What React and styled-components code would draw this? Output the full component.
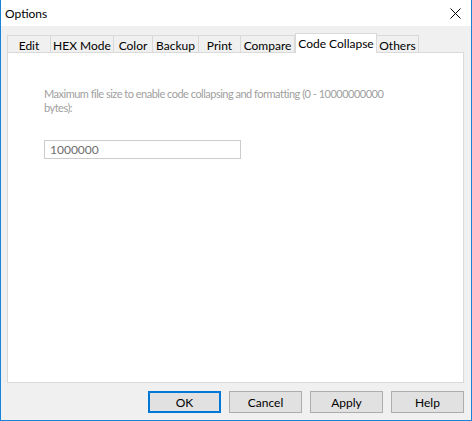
import React, { useState } from "react";
import styled, { createGlobalStyle } from "styled-components";

const GlobalStyle = createGlobalStyle`
  html, body {
    margin: 0;
    padding: 0;
    background: #ffffff;
  }
  body {
    font-family: Lato, "Liberation Sans", Arial, sans-serif;
    font-size: 12px;
    color: #000;
  }
`;

// Window frame
const Window = styled.div`
  width: 472px;
  height: 421px;
  box-sizing: border-box;
  border: 1px solid #1883d7;
  border-top: none;
  background: #f0f0f0;
  display: flex;
  flex-direction: column;
`;

const TitleBar = styled.div`
  height: 26px;
  flex-shrink: 0;
  background: #ffffff;
  display: flex;
  align-items: center;
  justify-content: space-between;
  padding: 0 10px 0 4px;
`;

const Title = styled.span`
  font-size: 12px;
  color: #000;
  padding-top: 1px;
`;

const CloseButton = styled.button`
  border: none;
  background: transparent;
  padding: 0;
  width: 12px;
  height: 12px;
  display: flex;
  align-items: center;
  justify-content: center;
`;

const Body = styled.div`
  flex: 1;
  display: flex;
  flex-direction: column;
  padding: 7px 7px 7px 6px;
`;

// Tabs
const TabStrip = styled.div`
  display: flex;
  align-items: flex-end;
  height: 20px;
  position: relative;
  z-index: 1;
`;

const Tab = styled.div`
  box-sizing: border-box;
  width: ${(p) => p.$w}px;
  height: ${(p) => (p.$active ? 20 : 18)}px;
  border: 1px solid #d9d9d9;
  border-bottom: ${(p) => (p.$active ? "none" : "1px solid #d9d9d9")};
  border-left: ${(p) => (p.$first || p.$active ? "1px solid #d9d9d9" : "none")};
  background: ${(p) => (p.$active ? "#ffffff" : "#f0f0f0")};
  display: flex;
  align-items: center;
  justify-content: center;
  padding-top: ${(p) => (p.$active ? 0 : 2)}px;
  cursor: default;
  white-space: nowrap;
`;

const Panel = styled.div`
  flex: 1;
  margin-top: -1px;
  background: #ffffff;
  border: 1px solid #d9d9d9;
  padding: 34px 36px 0 36px;
  display: flex;
  flex-direction: column;
`;

const Label = styled.div`
  color: #a0a0a0;
  font-size: 11px;
  letter-spacing: -0.5px;
  line-height: 14px;
  white-space: nowrap;
`;

const Input = styled.input`
  margin-top: 25px;
  width: 197px;
  height: 19px;
  box-sizing: border-box;
  border: 1px solid #cccccc;
  padding: 0 5px;
  font-family: Lato, "Liberation Sans", Arial, sans-serif;
  font-size: 12px;
  color: #6d6d6d;
  background: #ffffff;
  outline: none;
`;

// Buttons
const ButtonRow = styled.div`
  display: flex;
  justify-content: flex-end;
  gap: 8px;
  margin-top: 8px;
`;

const Button = styled.button`
  box-sizing: border-box;
  width: 73px;
  height: 22px;
  background: #e1e1e1;
  border: ${(p) => (p.$default ? "2px solid #0078d7" : "1px solid #adadad")};
  font-family: Lato, "Liberation Sans", Arial, sans-serif;
  font-size: 12px;
  color: #000;
  padding: 0;
`;

const tabs = [
  { name: "Edit", w: 44 },
  { name: "HEX Mode", w: 63 },
  { name: "Color", w: 39 },
  { name: "Backup", w: 46 },
  { name: "Print", w: 42 },
  { name: "Compare", w: 54 },
  { name: "Code Collapse", w: 82 },
  { name: "Others", w: 42 },
];

const App = () => {
  const [active, setActive] = useState("Code Collapse");

  return (
    <>
      <GlobalStyle />
      <Window>
        <TitleBar>
          <Title>Options</Title>
          <CloseButton aria-label="Close">
            <svg width="11" height="11" viewBox="0 0 11 11">
              <path d="M0.5 0.5 L10.5 10.5 M10.5 0.5 L0.5 10.5" stroke="#000" strokeWidth="1" />
            </svg>
          </CloseButton>
        </TitleBar>
        <Body>
          <TabStrip>
            {tabs.map((t, i) => (
              <Tab
                key={t.name}
                $w={t.w}
                $first={i === 0}
                $active={t.name === active}
                onClick={() => setActive(t.name)}
              >
                {t.name}
              </Tab>
            ))}
          </TabStrip>
          <Panel>
            <Label>
              Maximum file size to enable code collapsing and formatting (0 - 10000000000
              <br />
              bytes):
            </Label>
            <Input defaultValue="1000000" />
          </Panel>
          <ButtonRow>
            <Button $default>OK</Button>
            <Button>Cancel</Button>
            <Button>Apply</Button>
            <Button>Help</Button>
          </ButtonRow>
        </Body>
      </Window>
    </>
  );
};

export default App;
